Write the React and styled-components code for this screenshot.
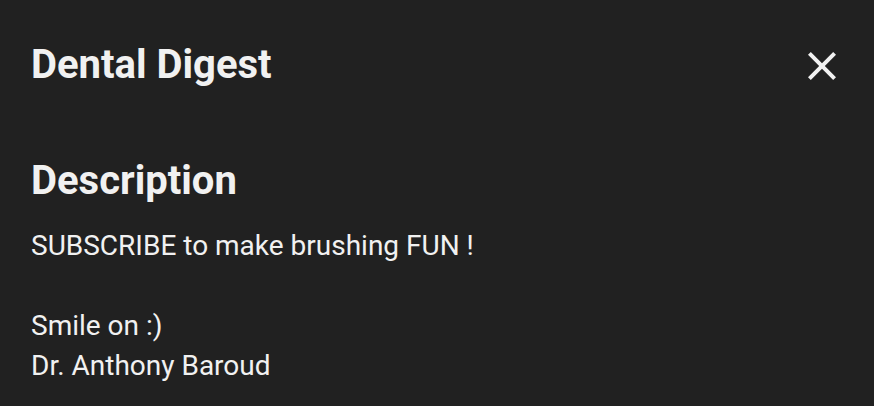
import React from 'react';
import styled, { createGlobalStyle } from 'styled-components';

const GlobalStyle = createGlobalStyle`
  html, body {
    margin: 0;
    padding: 0;
    background: #212121;
  }
  body {
    font-family: Roboto, "Liberation Sans", sans-serif;
    color: #f1f1f1;
  }
`

//whole sheet
const Sheet = styled.div`
  width: 874px;
  height: 406px;
  background: #212121;
  overflow: hidden;
  box-sizing: border-box;
`
//title bar with close button
const Header = styled.div`
  height: 132px;
  display: flex;
  align-items: center;
  justify-content: space-between;
  padding: 0 28px 0 31px;
`
const Title = styled.h1`
  margin: 0;
  font-size: 40px;
  font-weight: 700;
  line-height: 48px;
  color: #f1f1f1;
  padding-bottom: 2px;
`
const CloseButton = styled.button`
  width: 48px;
  height: 48px;
  padding: 0;
  border: none;
  background: transparent;
  display: flex;
  align-items: center;
  justify-content: center;
  cursor: pointer;
  color: #f1f1f1;
`
//description block
const Section = styled.div`
  padding: 25px 31px 0 31px;
`
const Heading = styled.h2`
  margin: 0 0 21px 0;
  font-size: 40px;
  font-weight: 700;
  line-height: 48px;
  color: #f1f1f1;
`
const Body = styled.p`
  margin: 0;
  font-size: 28px;
  line-height: 40px;
  white-space: pre-line;
  color: #f1f1f1;
`

const CloseIcon = () => (
  <svg width="48" height="48" viewBox="0 0 24 24" fill="currentColor">
    <path d="M19 6.41 17.59 5 12 10.59 6.41 5 5 6.41 10.59 12 5 17.59 6.41 19 12 13.41 17.59 19 19 17.59 13.41 12z" />
  </svg>
)

const description = 'SUBSCRIBE to make brushing FUN !\n\nSmile on :)\nDr. Anthony Baroud';

export default function App() {
  return (
    <>
      <GlobalStyle />
      <Sheet>
        <Header>
          <Title>Dental Digest</Title>
          <CloseButton aria-label="Close"><CloseIcon /></CloseButton>
        </Header>
        <Section>
          <Heading>Description</Heading>
          <Body>{description}</Body>
        </Section>
      </Sheet>
    </>
  );
}
